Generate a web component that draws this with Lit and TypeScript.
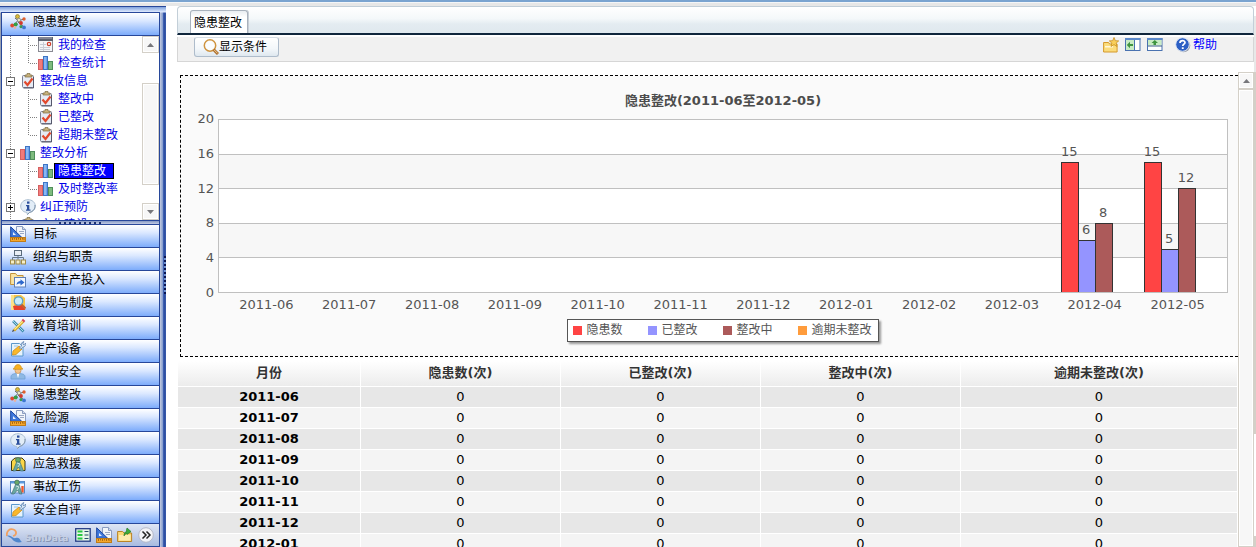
import { LitElement, html, css, svg, nothing } from "lit";
import { customElement, property } from "lit/decorators.js";
import { classMap } from "lit/directives/class-map.js";
import { styleMap } from "lit/directives/style-map.js";

const glyphs: Record<string, unknown> = {
  molecule: svg`
    <path d="M5 4 L11 9 M4 11 L10 4 M8 7 L14 5 M8 8 L14 13 M3 11 L8 10" stroke="#666" fill="none"/>
    <circle cx="7.5" cy="2.5" r="2" fill="#d8b93c" stroke="#7d6a1c" stroke-width=".6"/>
    <circle cx="2.2" cy="11.5" r="1.9" fill="#e0482e"/><circle cx="5.6" cy="10.4" r="2" fill="#35a045"/>
    <circle cx="9" cy="6" r="1.7" fill="#e9e4c0" stroke="#777" stroke-width=".5"/>
    <circle cx="14" cy="5" r="1.7" fill="#e0602e"/><circle cx="11" cy="9" r="1.9" fill="#d33a2c"/>
    <circle cx="11" cy="12.6" r="1.6" fill="#3a9a50"/><circle cx="14" cy="13.4" r="1.9" fill="#3c78d0"/>
    <circle cx="5" cy="13.6" r="1.3" fill="#e9b0a0"/>`,
  report: svg`
    <rect x=".5" y="1.5" width="14" height="13" fill="#f4f5f8" stroke="#8a8a92"/>
    <rect x="0" y="0" width="15" height="4" fill="#5d6270"/><path d="M1 1h13" stroke="#aab"/>
    <path d="M2 7.5h6M2 10.5h10M2 12.5h10M5.5 5v9" stroke="#c9ccd6"/>
    <circle cx="11" cy="7" r="1.7" fill="none" stroke="#d0402c" stroke-width="1.2"/>`,
  bars: svg`
    <rect x=".5" y="4.5" width="4" height="10" fill="#f27a7a" stroke="#d46060"/>
    <rect x="5.5" y="1.5" width="4" height="13" fill="#6ba3ee" stroke="#3f74c4"/>
    <path d="M7 2v12" stroke="#a9cbf8"/>
    <rect x="10.5" y="6.5" width="4" height="8" fill="#7dbb7d" stroke="#4f8d5a"/>`,
  check: svg`
    <rect x="2.5" y="2.5" width="11" height="12" rx="1" fill="#e6ebf4" stroke="#7c7f92"/>
    <path d="M13.5 4v11h-10" stroke="#55586c" fill="none"/>
    <path d="M5 4V2h2V.5h3V2h2v2z" fill="#c8b27c" stroke="#7b6b42" stroke-width=".7"/>
    <path d="M4.5 8.500 L7.500 12 L12.500 5.500" stroke="#e2492c" stroke-width="2.200" fill="none"/>`,
  info: svg`
    <path d="M8 .7c4.300 0 7.300 2.800 7.300 6.400S12.500 13 9.500 13.400L7.500 15.600 6.800 13.400C3 13 .7 10.500.7 7.100S3.700.7 8 .7z" fill="#e2edf7" stroke="#a9bdd0"/>
    <path d="M15 6c.3 4-2 6.600-5.500 7.400L7.500 15.500" fill="none" stroke="#7f94aa"/>
    <rect x="7" y="2.500" width="2.500" height="2.200" fill="#2b4f9c"/>
    <path d="M6 6h3.300v4.500h1.200v1.200H6v-1.200h1V7.200H6z" fill="#2b4f9c"/>`,
  ruler: svg`
    <path d="M6.500.5h6l3 3v8h-9z" fill="#f2f5fa" stroke="#8a9cc0"/><path d="M12.500.5v3h3" fill="#cfd9ea" stroke="#8a9cc0"/>
    <path d="M9 5.500h5M10 7.500h4" stroke="#9aa8c4"/>
    <path d="M.7.8v10.500h11z" fill="#3f78dc" stroke="#1b46a0"/><path d="M3 6v3h3z" fill="#e8effc"/>
    <rect x=".5" y="11.500" width="15" height="4" fill="#f5a72c" stroke="#c07c18"/>
    <path d="M2.500 12v2M4.500 12v1.500M6.500 12v2M8.500 12v1.500M10.500 12v2M12.500 12v1.500M14 12v2" stroke="#8c5208" stroke-width=".7"/>`,
  org: svg`
    <rect x="4.500" y="1.500" width="7" height="5" fill="#e8eef5" stroke="#5a6b7c"/>
    <path d="M8 7v3.500M2.500 11V8.500h11V11" stroke="#66788a" fill="none"/>
    <g fill="#f6efc8" stroke="#a08c48"><rect x=".5" y="11" width="4" height="4"/><rect x="6" y="11" width="4" height="4"/><rect x="11.500" y="11" width="4" height="4"/></g>`,
  folder: svg`
    <path d="M.6 12.500V1.500h5l1.500 2h6v9z" fill="#fbe3a0" stroke="#c2923a"/>
    <rect x="4.500" y="5.500" width="11" height="9.500" fill="#f4f8fe" stroke="#5f80b8"/>
    <path d="M6.500 13c.2-3 2-4 4-4V7.200l4 3.300-4 3v-1.900c-1.500 0-3 .2-4 1.400z" fill="#2e68cc"/>`,
  book: svg`
    <path d="M1 0h10l4 3v12H1z" fill="#f7c548"/><path d="M1 0h3v15H1z" fill="#fbe28a"/>
    <path d="M3 11l8-1.500 4.500 5.500H4z" fill="#e5402c"/>
    <circle cx="8.500" cy="6" r="4.200" fill="#c9ecfa" stroke="#5aa0c8" stroke-width="1.300"/>
    <path d="M11.500 9.500l4 4" stroke="#c06030" stroke-width="2"/>`,
  pencils: svg`
    <path d="M3 3l10.500 10.500" stroke="#3f8db0" stroke-width="2.600"/><path d="M3 3l10 10" stroke="#a8dbe8" stroke-width="1"/>
    <path d="M13.500 3L4 12.500" stroke="#d8a820" stroke-width="2.800"/><path d="M13 3L4.500 11.500" stroke="#fce98c" stroke-width="1.200"/>
    <path d="M12.300 1.500l2.300 2.300" stroke="#d84a5a" stroke-width="2"/><path d="M2 14l1-2.500 1.500 1.500z" fill="#444"/>`,
  wrench: svg`
    <path d="M1.500 2.500h8l3.500 3v9.500h-11.500z" fill="#e6f3fc" stroke="#5b98cc"/>
    <path d="M4 5h4" stroke="#9cc4e4"/>
    <path d="M2.500 14l.5-4 6-5 3 3-6 5.500z" fill="#f9b82c" stroke="#d08c18" stroke-width=".8"/>
    <path d="M9.500 7l2-2c-.5-2.500.5-4 2.300-4.500l-1 2.500 1.200.9 1.600-1.900c.4 2.300-.7 4-2.900 4.200l-2 2z" fill="#dbe8f4" stroke="#5d82b0" stroke-width=".8"/>`,
  worker: svg`
    <path d="M1 15v-2c0-2.500 2-3.500 7-3.500s7 1 7 3.500v2z" fill="#8fb9e4" stroke="#6f9fd0" stroke-width=".8"/>
    <path d="M6.500 9h3l-1.500 5z" fill="#fff"/><circle cx="8" cy="6.500" r="3" fill="#f5c48c" stroke="#b87d40" stroke-width=".6"/>
    <path d="M3.500 5.300h9v-1h-1c-.2-2.400-1.500-3.700-3.500-3.700S4.700 1.900 4.500 4.300h-1z" fill="#f8b020" stroke="#c88810" stroke-width=".6"/>`,
  rescue: svg`
    <path d="M1.500 14.500V5l3.500-3h7l3 3v9.500z" fill="#fbd648" stroke="#3d3a14"/>
    <circle cx="8" cy="4" r="2.500" fill="#68a868" stroke="#3c5c58" stroke-width=".6"/>
    <path d="M6.500 6h3.500l3.500 9h-3L8.500 11 5.500 15H3z" fill="#6aa8a2" stroke="#3f6a70" stroke-width=".6"/><path d="M7 7l3 1-2 3" stroke="#cce4e0" fill="none"/>`,
  injury: svg`
    <rect x=".5" y="2.500" width="14" height="11.500" fill="#f4f8ff" stroke="#5a88c0"/><path d="M1 3.500h13" stroke="#5a9ae0" stroke-width="2"/>
    <path d="M12.500 7v6.500" stroke="#f0562c" stroke-width="2.400"/>
    <circle cx="7" cy="3.500" r="2.400" fill="#68a868" stroke="#3c5c58" stroke-width=".6"/>
    <path d="M5.500 5.500H9l3 9.500H9.500L7.500 11 4 15H1.500z" fill="#6aa8a2" stroke="#3f6a70" stroke-width=".6"/><path d="M6 7l3 1-2 3" stroke="#cce4e0" fill="none"/>`,
  list: svg`
    <rect x=".7" y="1.700" width="14.500" height="12.500" fill="#e9f7e9" stroke="#243c86" stroke-width="1.300"/>
    <path d="M2.500 4.500h5M2.500 8h5M2.500 11.500h5" stroke="#28c840" stroke-width="2"/>
    <path d="M9.500 4.500h4M9.500 8h4M9.500 11.500h4" stroke="#24506a"/>`,
  upload: svg`
    <path d="M.6 14.500V4.500h5l1.500 1.500h7.500v8.500z" fill="#fbd878" stroke="#b98426"/><path d="M2 8h11.500v5.500H2z" fill="#fdebb0"/>
    <path d="M7 9c0-3 .8-4 2.500-4.200V3L10 1l4 3.500-4 3V6.500C8.600 6.500 8 7.500 7 9z" fill="#3cae3c" stroke="#1f7424" stroke-width=".6"/>`,
  more: svg`
    <circle cx="8" cy="8" r="7.300" fill="#f2f3f7" stroke="#b4b9c8"/>
    <path d="M4.500 4.500L8 8l-3.500 3.500M8.500 4.500L12 8l-3.500 3.500" fill="none" stroke="#222" stroke-width="1.500"/>`,
  magnifier: svg`
    <circle cx="7" cy="6.500" r="5.700" fill="#fbfdfe" stroke="#cf9440" stroke-width="1.500"/>
    <path d="M10.500 10.500l4.500 4.500" stroke="#ad7030" stroke-width="3"/><path d="M11 10.800l3.500 3.500" stroke="#f2cd94"/>`,
  star: svg`
    <path d="M.6 15V5.500h5l1 1.500h7.500v8z" fill="#fbdc7c" stroke="#d59a2c"/><path d="M2 9h8v1.500H2z" fill="#fff8dc"/>
    <path d="M11 .5l1.300 3.200 3.400.2-2.600 2.200.9 3.400-3-1.900-3 1.900.9-3.400L6.300 3.900l3.400-.2z" fill="#f9cf5c" stroke="#c98f20" stroke-width=".8"/>`,
  paneLeft: svg`
    <rect x=".5" y="1.500" width="14.500" height="12" fill="#fff" stroke="#4a72b0"/><path d="M0 2h15.500" stroke="#5d8acb" stroke-width="2"/>
    <rect x="1" y="3" width="8" height="10" fill="#c9ecc4"/><path d="M9.500 3v10" stroke="#4a72b0"/>
    <path d="M1.800 8L5 4.800V7h3v2H5v2.200z" fill="#3f9440"/>`,
  paneTop: svg`
    <rect x=".5" y="1.500" width="14.500" height="12" fill="#fff" stroke="#4a72b0"/><path d="M0 2h15.500" stroke="#5d8acb" stroke-width="2"/>
    <rect x="1" y="3" width="13.500" height="5.500" fill="#c9ecc4"/><path d="M1 9h14" stroke="#3c5c88"/>
    <path d="M7.800 3L11 6H9v2H6.500V6h-2z" fill="#3f9440"/>`,
  help: svg`
    <circle cx="8.500" cy="8.500" r="6.800" fill="#9aa0ac"/><circle cx="7.500" cy="7.500" r="6.800" fill="#2c5fc4" stroke="#dfe8f6"/>
    <path d="M5 6c0-3 5-3 5-.4 0 1.600-2.300 1.600-2.300 3.500" fill="none" stroke="#fff" stroke-width="1.700"/><rect x="6.800" y="10.300" width="1.900" height="1.700" fill="#fff"/>`,
  logo: svg`
    <path d="M1 9C0 4 4 1 7.500 2.500S11 8 7 9" fill="none" stroke="#f0a060" stroke-width="1.800"/>
    <path d="M1 9c4-2 5 3 9 2s4 3 6 4c-4 1-8 0-10-3-2-2-3-2-5-3z" fill="#4f86cc"/>`,
};

@customElement("app-icon")
class AppIcon extends LitElement {
  @property() name = "";
  static styles = css`
    :host { display: block; flex: none; width: 16px; height: 16px; }
    .glyph { display: block; width: 100%; height: 100%; }
  `;
  render() {
    return html`<svg class="glyph" viewBox="0 0 16 16" aria-hidden="true">${glyphs[this.name] ?? nothing}</svg>`;
  }
}

@customElement("scroll-rail")
class ScrollRail extends LitElement {
  @property({ type: Boolean, reflect: true }) end = false;
  static styles = css`
    :host { display: flex; flex-direction: column; flex: none; box-sizing: border-box; background: #fff; }
    .arrow { box-sizing: border-box; flex: none; height: 17px; width: 100%; padding: 0; margin: 0; display: flex; align-items: center; justify-content: center; }
    .arrow, .thumb { background: #f7f7f7; border: 1px solid #d4d0c8; box-shadow: inset 0 0 0 1px #fff; }
    .track { flex: 1; display: flex; flex-direction: column; min-height: 0; }
    .thumb { box-sizing: border-box; margin-top: var(--thumb-start, 0); flex: 0 0 var(--thumb-size, 100%); }
    .tip { display: block; width: 7px; height: 4px; }
  `;
  render() {
    return html`
      <button class="arrow" aria-label="上"><svg class="tip" viewBox="0 0 7 4"><path d="M0 4L3.500 0 7 4z" fill="#77777b"/></svg></button>
      <div class="track"><div class="thumb"></div></div>
      ${this.end ? html`<button class="arrow" aria-label="下"><svg class="tip" viewBox="0 0 7 4"><path d="M0 0L3.500 4 7 0z" fill="#77777b"/></svg></button>` : nothing}
    `;
  }
}

interface TreeRow { label: string; icon: string; level: 1 | 2; open?: boolean; last?: boolean; selected?: boolean; }

const treeRows: TreeRow[] = [
  { label: "我的检查", icon: "report", level: 2 },
  { label: "检查统计", icon: "bars", level: 2, last: true },
  { label: "整改信息", icon: "check", level: 1, open: true },
  { label: "整改中", icon: "check", level: 2 },
  { label: "已整改", icon: "check", level: 2 },
  { label: "超期未整改", icon: "check", level: 2, last: true },
  { label: "整改分析", icon: "bars", level: 1, open: true },
  { label: "隐患整改", icon: "bars", level: 2, selected: true },
  { label: "及时整改率", icon: "bars", level: 2, last: true },
  { label: "纠正预防", icon: "info", level: 1, open: false },
  { label: "文化建设", icon: "check", level: 1, open: false },
];

const modules = [
  ["目标", "ruler"], ["组织与职责", "org"], ["安全生产投入", "folder"], ["法规与制度", "book"],
  ["教育培训", "pencils"], ["生产设备", "wrench"], ["作业安全", "worker"], ["隐患整改", "molecule"],
  ["危险源", "ruler"], ["职业健康", "info"], ["应急救援", "rescue"], ["事故工伤", "injury"], ["安全自评", "wrench"],
];

@customElement("side-nav")
class SideNav extends LitElement {
  static styles = css`
    :host {
      display: flex; flex: none; box-sizing: border-box; width: 166px; padding: 5px 0 0 1px;
      border-top: 1px solid #27479a;
      background: linear-gradient(to bottom, #7fa2dc, #dfeaff 5px, transparent 6px), linear-gradient(to right, #9aa3b4, #c5cce0 160px, #7f98cc 163px, #4467b8 163px, #27479a 165px, #4467b8);
      font: 12px/18px "DejaVu Sans", "Noto Sans CJK SC", sans-serif; color: #000;
    }
    .panel { flex: 1; min-width: 0; display: flex; flex-direction: column; border: 1px solid #27479a; background: #fff; }
    .bar {
      box-sizing: border-box; flex: none; display: flex; gap: 7px; width: 100%; height: 23px; margin: 0; padding: 0 0 4px 8px;
      border: 0; border-bottom: 1px solid #27479a; font: inherit; color: inherit; text-align: left;
      background: linear-gradient(to bottom, #fff, #dbe8ff 35%, #7dacfb);
    }
    .bar app-icon { margin-top: 1px; }
    .tree { flex: 1; min-height: 0; display: flex; overflow: hidden; }
    .rows { flex: 1; min-width: 0; margin: 0; padding: 0; list-style: none; overflow: hidden; }
    .row { display: flex; align-items: center; height: 18px; white-space: nowrap; }
    .cell { flex: none; width: 18px; height: 18px; display: flex; align-items: center; box-sizing: border-box; padding-left: 4px;
      background: repeating-linear-gradient(to bottom, #808080 0 1px, #fff 1px 2px) 8px 0 / 1px 100% no-repeat; }
    .branch { background:
      repeating-linear-gradient(to bottom, #808080 0 1px, #fff 1px 2px) 8px 0 / 1px 100% no-repeat,
      repeating-linear-gradient(to right, #808080 0 1px, #fff 1px 2px) 8px 9px / 10px 1px no-repeat; }
    .last { background-size: 1px 10px, 10px 1px; }
    .toggle { box-sizing: border-box; flex: none; width: 9px; height: 9px; padding: 0; border: 1px solid #777; 
      background: linear-gradient(#000, #000) 1px 3px / 5px 1px no-repeat, #fff; }
    .closed { background: linear-gradient(#000, #000) 1px 3px / 5px 1px no-repeat, linear-gradient(#000, #000) 3px 1px / 1px 5px no-repeat, #fff; }
    .link { box-sizing: border-box; height: 16px; line-height: 14px; padding: 0 7px 0 3px; border: 1px solid transparent; color: #0000e8; text-decoration: none; }
    .chosen { background: #00f; border-color: #000; color: #fff; }
    scroll-rail { width: 17px; --thumb-start: 30px; --thumb-size: 102px; }
    .splitter { flex: none; height: 3px; border: solid #27479a; border-width: 1px 0; 
      background: repeating-linear-gradient(to right, #1b2f70 0 2px, transparent 2px 5px) center / 43px 2px no-repeat, linear-gradient(#8498c4, #c3cce4); }
    .foot { flex: none; height: 22px; display: flex; align-items: center; justify-content: space-between; padding: 0 5px 0 4px;
      background: linear-gradient(to bottom, #dfe6f4, #a9bbe0); }
    .brand { display: flex; align-items: center; gap: 3px; }
    .name { padding-top: 6px; font: bold 9px/12px "DejaVu Sans", sans-serif; color: #c5cfe2; text-shadow: 1px 1px 0 #8896b4; }
    .tools { display: flex; gap: 5px; }
    .tool { padding: 0; border: 0; background: none; }
    .edge { flex: none; width: 6px; display: flex; align-items: center; justify-content: flex-end; padding-bottom: 10px; box-sizing: border-box; }
    .grip { width: 2px; height: 38px; background: repeating-linear-gradient(to bottom, #0a1550 0 2px, #6d8fd0 2px 4px); }
  `;
  render() {
    return html`
      <nav class="panel">
        <button class="bar"><app-icon name="molecule"></app-icon>隐患整改</button>
        <div class="tree">
          <ul class="rows">
            ${treeRows.map((row) => html`
              <li class="row">
                <span class="cell">
                  ${row.level === 1 ? html`<button class=${classMap({ toggle: true, closed: !row.open })} aria-label=${row.open ? "收起" : "展开"}></button>` : nothing}
                </span>
                ${row.level === 2 ? html`<span class=${classMap({ cell: true, branch: true, last: !!row.last })}></span>` : nothing}
                <app-icon name=${row.icon}></app-icon>
                <a href="#" class=${classMap({ link: true, chosen: !!row.selected })}>${row.label}</a>
              </li>`)}
          </ul>
          <scroll-rail end></scroll-rail>
        </div>
        <div class="splitter"></div>
        ${modules.map(([label, icon]) => html`<button class="bar"><app-icon name=${icon}></app-icon>${label}</button>`)}
        <div class="foot">
          <span class="brand"><app-icon name="logo"></app-icon><span class="name">SunData</span></span>
          <span class="tools">
            ${[["list", "列表"], ["ruler", "目标"], ["upload", "上传"], ["more", "更多"]].map(([icon, label]) => html`<button class="tool" aria-label=${label}><app-icon name=${icon}></app-icon></button>`)}
          </span>
        </div>
      </nav>
      <div class="edge"><div class="grip"></div></div>
    `;
  }
}

const series = [
  { label: "隐患数", color: "#ff4444" },
  { label: "已整改", color: "#9494ff" },
  { label: "整改中", color: "#ac5a5a" },
  { label: "逾期未整改", color: "#ff9c3c" },
];

const months: { month: string; values: number[] }[] = [
  "2011-06", "2011-07", "2011-08", "2011-09", "2011-10", "2011-11", "2011-12", "2012-01", "2012-02", "2012-03",
].map((month) => ({ month, values: [0, 0, 0, 0] }));
months.push({ month: "2012-04", values: [15, 6, 8, 0] }, { month: "2012-05", values: [15, 5, 12, 0] });

const axisMax = 20;
const ticks = [20, 16, 12, 8, 4, 0];

@customElement("month-chart")
class MonthChart extends LitElement {
  static styles = css`
    :host { display: block; font: 13px/16px "DejaVu Sans", "Noto Sans CJK SC", sans-serif; color: #555;
      background: #fafafa; border: 1px dashed #000; border-right: 0; }
    .frame { display: grid; grid-template-columns: 33px 1fr; column-gap: 4px; padding: 17px 10px 14px 0; }
    .title { grid-column: 2; margin: 0 0 10px; font: inherit; font-weight: bold; color: #4c4c4c; text-align: center; }
    .axis { display: flex; flex-direction: column; justify-content: space-between; margin: -8px 0; text-align: right; }
    .plot { display: grid; height: 174px; box-sizing: border-box; border: 1px solid #c0c0c0; border-top: 0; background: #fff; }
    .bands, .groups { grid-area: 1 / 1; min-height: 0; }
    .bands { display: grid; grid-auto-rows: 1fr; }
    .band { border-top: 1px solid #c0c0c0; }
    .band:nth-child(even) { background: #f7f7f7; }
    .groups, .labels { display: grid; grid-template-columns: repeat(12, 1fr); }
    .groups { padding: 0 8px 0 6px; }
    .group { display: flex; justify-content: center; align-items: flex-end; gap: 0; min-width: 0; }
    .slot { flex: none; width: 17px; height: 100%; display: flex; flex-direction: column; justify-content: flex-end; align-items: center; }
    .value { line-height: 18px; padding-bottom: 1px; }
    .bar { box-sizing: border-box; flex: none; width: 18px; margin-right: -1px; border: 1px solid #333; border-bottom: 0; }
    .labels { grid-column: 2; padding: 4px 9px 0 7px; text-align: center; }
    .legend { grid-column: 2; justify-self: center; display: flex; margin: 6px 0 0; padding: 0 6px 0 5px; list-style: none;
      background: #fff; border: 1px solid #555; box-shadow: 2px 2px 2px #999; font-size: 12px; line-height: 21px; }
    .entry { display: flex; align-items: center; gap: 4px; width: 75px; white-space: nowrap; }
    .entry:last-child { width: auto; }
    .swatch { width: 9px; height: 9px; }
  `;
  render() {
    return html`
      <div class="frame">
        <h2 class="title">隐患整改(2011-06至2012-05)</h2>
        <div class="axis">${ticks.map((tick) => html`<span>${tick}</span>`)}</div>
        <div class="plot">
          <div class="bands">${ticks.slice(1).map(() => html`<div class="band"></div>`)}</div>
          <div class="groups">
            ${months.map(({ values }) => html`<div class="group">
              ${values.map((value, i) => html`<div class="slot">
                ${value ? html`<span class="value">${value}</span>
                  <div class="bar" style=${styleMap({ height: `${(value / axisMax) * 100}%`, background: series[i].color })}></div>` : nothing}
              </div>`)}
            </div>`)}
          </div>
        </div>
        <div class="labels">${months.map(({ month }) => html`<span>${month}</span>`)}</div>
        <ul class="legend">
          ${series.map((s) => html`<li class="entry"><span class="swatch" style=${styleMap({ background: s.color })}></span>${s.label}</li>`)}
        </ul>
      </div>
    `;
  }
}

@customElement("app-root")
class AppRoot extends LitElement {
  static styles = css`
    :host { display: flex; flex-direction: column; height: 100vh; overflow: hidden; background: #fff;
      font: 12px/18px "DejaVu Sans", "Noto Sans CJK SC", sans-serif; color: #000; }
    .strip { flex: none; height: 3px; border-top: 2px solid #7ba4d0; border-bottom: 1px solid #e7e7e7;
      background: linear-gradient(#f4f6f8 1px, #e7e7e7 1px); }
    .page { flex: 1; min-height: 0; display: flex; }
    .main { flex: 1; min-width: 0; display: flex; flex-direction: column; margin-left: 11px; }
    .tabs { flex: none; box-sizing: border-box; height: 29px; padding: 3px 12px 0; border: 1px solid #c3cfd8; border-bottom: 2px solid #10263c;
      border-radius: 4px 4px 0 0; background: linear-gradient(to bottom, #fff, #f4f8fa 45%, #e4ecf1 65%, #dfe8ee); display: flex; }
    .tab { box-sizing: border-box; padding: 2px 5px 1px 3px; border: 1px solid #a9b2bd; border-bottom: 0; border-radius: 3px 3px 0 0;
      background: linear-gradient(to bottom, #e9edf1, #fff 6px); font: inherit; color: #000; box-shadow: 1px 0 0 #c8ced6; }
    .toolbar { flex: none; box-sizing: border-box; height: 25px; margin-top: 2px; padding: 0 36px 0 16px; display: flex; justify-content: space-between;
      align-items: flex-start; background: #f1f1f1; border: solid #d6d6d6; border-width: 0 1px 1px; }
    .filter { display: flex; align-items: center; box-sizing: border-box; height: 20px; margin: 0; padding: 0 11px 0 8px; border: 1px solid #aebccb; border-top-color: #d5dde4;
      border-radius: 3px; background: linear-gradient(to bottom, #fff, #f3f7fa 60%, #dfe8ef); font: inherit; color: #000; }
    .actions { display: flex; align-items: center; gap: 6px; height: 16px; }
    .action { padding: 0; border: 0; background: none; }
    .help { display: flex; align-items: center; gap: 2px; margin-left: 6px; color: #00f; text-decoration: none; }
    .view { flex: 1; min-height: 0; display: flex; margin-top: 10px; }
    .content { flex: 1; min-width: 0; overflow: hidden; padding-top: 2px; }
    month-chart { margin: 1px 0 0 3px; }
    .grid { width: 100%; table-layout: fixed; border-collapse: separate; border-spacing: 0; margin-top: 4px; padding-left: 1px; font-size: 13px; line-height: 20px; }
    .first { width: 183px; }
    .mid { width: 200px; }
    .head { height: 26px; padding: 0; box-sizing: border-box; line-height: 24px; vertical-align: top; color: #333; background: linear-gradient(to bottom, #fff, #ececec); background-clip: padding-box; }
    .head, .cell { border: solid #fff; border-width: 0 1px 1px 0; text-align: center; }
    .cell { padding: 0; height: 20px; background: #f4f4f4; }
    .odd .cell { background: #e7e7e7; }
    scroll-rail { width: 16px; }
    .sliver { flex: none; width: 2px; margin-top: 10px; background: linear-gradient(to bottom, #e8e8e8 56px, #d4d0c8 56px 418px, #fff 418px 520px, #d4d0c8 520px); }
  `;
  render() {
    return html`
      <div class="strip"></div>
      <div class="page">
        <side-nav></side-nav>
        <main class="main">
          <div class="tabs"><button class="tab">隐患整改</button></div>
          <div class="toolbar">
            <button class="filter"><app-icon name="magnifier"></app-icon>显示条件</button>
            <div class="actions">
              <button class="action" aria-label="收藏"><app-icon name="star"></app-icon></button>
              <button class="action" aria-label="左侧"><app-icon name="paneLeft"></app-icon></button>
              <button class="action" aria-label="顶部"><app-icon name="paneTop"></app-icon></button>
              <a class="help" href="#"><app-icon name="help"></app-icon>帮助</a>
            </div>
          </div>
          <div class="view">
            <div class="content">
              <month-chart></month-chart>
              <table class="grid">
                <colgroup><col class="first"><col class="mid"><col class="mid"><col class="mid"><col></colgroup>
                <thead><tr><th class="head" scope="col">月份</th>${series.map((s) => html`<th class="head" scope="col">${s.label}(次)</th>`)}</tr></thead>
                <tbody>
                  ${months.slice(0, 8).map(({ month, values }, i) => html`<tr class=${classMap({ odd: i % 2 === 0 })}>
                    <th class="cell" scope="row">${month}</th>${values.map((v) => html`<td class="cell">${v}</td>`)}
                  </tr>`)}
                </tbody>
              </table>
            </div>
            <scroll-rail></scroll-rail>
          </div>
        </main>
        <div class="sliver"></div>
      </div>
    `;
  }
}
